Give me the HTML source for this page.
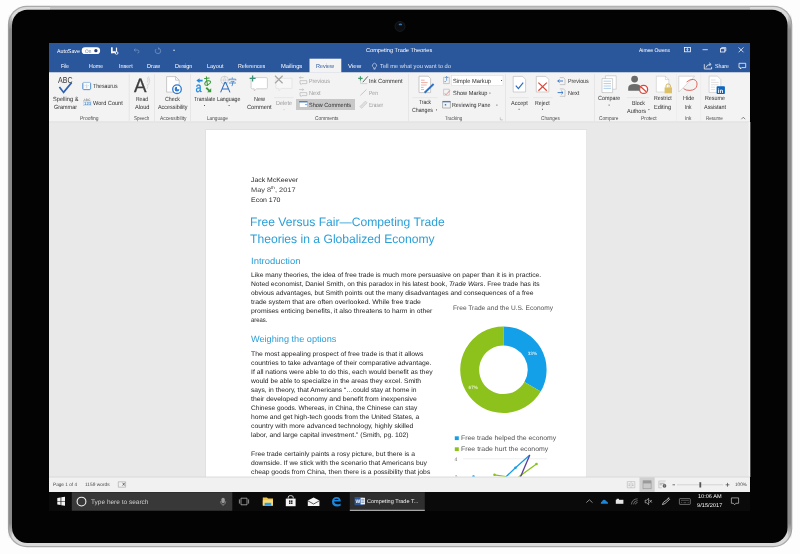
<!DOCTYPE html>
<html><head><meta charset="utf-8">
<style>
*{margin:0;padding:0;box-sizing:border-box}
html,body{width:800px;height:554px;overflow:hidden;background:#fdfdfd;font-family:"Liberation Sans",sans-serif;text-rendering:geometricPrecision}
.a{position:absolute;white-space:nowrap;line-height:1;transform-origin:0 0}
svg{position:absolute;left:0;top:0;will-change:transform}
</style></head><body>
<svg width="800" height="554" viewBox="0 0 800 554">
<defs>
<linearGradient id="sd" x1="0" y1="0" x2="0" y2="1"><stop offset="0" stop-color="#8a8a8a" stop-opacity="0"/><stop offset="0.03" stop-color="#8a8a8a"/><stop offset="0.97" stop-color="#8a8a8a"/><stop offset="1" stop-color="#8a8a8a" stop-opacity="0"/></linearGradient>
</defs>
<!-- frame -->
<rect x="7.9" y="5.7" width="784.4" height="541.6" rx="19" fill="#a9a9a9"/>
<rect x="9" y="6.9" width="782.2" height="539.2" rx="18" fill="#dadada"/>
<rect x="50" y="6.4" width="700" height="3.6" fill="#b9b9b9"/>
<rect x="50" y="7.6" width="700" height="1.2" fill="#cdcdcd"/>
<rect x="8.6" y="14" width="3.6" height="525" fill="url(#sd)"/>
<rect x="787.8" y="14" width="3.6" height="525" fill="url(#sd)"/>
<rect x="12" y="9.8" width="775.6" height="533.2" rx="15.5" fill="#030303"/>
<circle cx="400" cy="26.4" r="5" fill="#0b0d10" stroke="#1f2226" stroke-width="0.7"/>
<ellipse cx="400.4" cy="24.4" rx="1.8" ry="0.9" fill="#3a86c8" opacity="0.85"/>
<!-- screen -->
<rect x="49" y="43" width="701" height="468" fill="#e9e9e9"/>
<rect x="49" y="43" width="701" height="29.5" fill="#2a569b"/>
<rect x="309.5" y="58.7" width="31.8" height="14" fill="#f3f3f3"/>
<rect x="49" y="72.5" width="701" height="49.5" fill="#f3f3f3"/>
<rect x="49" y="121.5" width="701" height="0.8" fill="#dcdcdc"/>
<rect x="748.5" y="122" width="1.8" height="355" fill="#f4f4f4"/>
<!-- page -->
<rect x="205.4" y="129.4" width="381.5" height="348" fill="#dcdcdc"/>
<rect x="206" y="130" width="380.3" height="347" fill="#ffffff"/>
<!-- status bar -->
<rect x="49" y="477" width="701" height="15" fill="#f1f1f1"/>
<rect x="49" y="476.6" width="701" height="0.8" fill="#d4d4d4"/>
<!-- taskbar -->
<rect x="49" y="492" width="701" height="19" fill="#0a0a0a"/>
<rect x="71.8" y="492.2" width="160.5" height="18.5" fill="#383838"/>
<rect x="349.8" y="492.2" width="75" height="18.5" fill="#2f2f2f"/>
<rect x="349.8" y="509.8" width="75" height="1" fill="#c8c8c8"/>
<!-- ===== title bar icons ===== -->
<rect x="81.7" y="47.3" width="18.4" height="6.7" rx="3.35" fill="#fff"/>
<circle cx="95.9" cy="50.65" r="1.65" fill="#1f427c"/>
<g fill="#f4f6fa">
<rect x="111" y="47.3" width="1.7" height="5.9"/>
<rect x="111" y="51.2" width="4.6" height="2"/>
<rect x="115.9" y="47.6" width="1.2" height="4.2"/>
</g>
<circle cx="116.6" cy="53" r="1.35" fill="none" stroke="#eef2f8" stroke-width="0.9"/>
<g stroke="#7895c6" stroke-width="0.75" fill="none">
<path d="M134.2 50H137.2Q139 50 139 51.6Q139 53 137.4 53"/><path d="M135.5 48.6L134.1 50L135.5 51.4"/>
<path d="M156.2 49Q155.2 50 155.2 51Q155.2 53.6 158 53.6Q160.8 53.6 160.8 51Q160.8 48.4 158 48.4"/><path d="M158.3 47.4L159.2 48.4L158.1 49.4"/>
</g>
<rect x="173.4" y="49.7" width="1.3" height="1.1" fill="#fff"/>
<g stroke="#fff" stroke-width="0.75" fill="none">
<rect x="684.4" y="47.6" width="6" height="4.2"/>
<path d="M687.4 51.2V48.6M686.5 49.5L687.4 48.6L688.3 49.5"/>
<path d="M702.5 49.7H707.8"/>
<rect x="720.6" y="48.7" width="4.2" height="3.3"/><path d="M721.6 48.7V47.6H725.8V50.9H724.8"/>
<path d="M738.6 47.4L743.5 52.3M743.5 47.4L738.6 52.3"/>
<path d="M373.6 67.4A2.1 2.1 0 1 1 375.4 67.4V68.4H373.6ZM373.7 69.2H375.3" stroke="#e0e8f4" stroke-width="0.6"/>
<path d="M704.3 64.2V69H711.6V66.9M706 67.6Q706.6 64.6 710.4 64.3M709.2 62.8L711 64.3L709.6 65.9"/>
<path d="M739 63.3H745.7V67.6H741.7L740.4 69V67.6H739Z"/>
</g>
<!-- ===== ribbon ===== -->
<g fill="#e0e0e0">
<rect x="128.8" y="74" width="0.7" height="47"/>
<rect x="154" y="74" width="0.7" height="47"/>
<rect x="190.3" y="74" width="0.7" height="47"/>
<rect x="408.3" y="74" width="0.7" height="47"/>
<rect x="505.3" y="74" width="0.7" height="47"/>
<rect x="594.2" y="74" width="0.7" height="47"/>
<rect x="676.3" y="74" width="0.6" height="47" fill="#e9e9e9"/>
<rect x="700.5" y="74" width="0.6" height="47" fill="#e9e9e9"/>
</g>
<!-- spelling check -->
<path d="M59.4 87L63.6 92.4L71.6 82.6" stroke="#2e63b0" stroke-width="1.7" fill="none"/>
<!-- thesaurus -->
<rect x="82.8" y="82.4" width="7.8" height="7.2" rx="0.9" fill="#f8fafc" stroke="#86b3de" stroke-width="0.8"/>
<path d="M82.8 83.2V89.2M90.6 83.2V89.2M83.4 89.6H90" stroke="#5f97d0" stroke-width="0.9"/>
<path d="M86.7 84.4V88.2" stroke="#a9a9a9" stroke-width="0.5"/>
<path d="M84.6 85.6H85.6M87.8 85.6H88.8" stroke="#b8b8b8" stroke-width="0.5"/>
<!-- word count -->
<text x="83.4" y="100.9" font-family="Liberation Sans" font-size="3.4" fill="#666">ABC</text>
<rect x="83.6" y="101.4" width="7.4" height="4.4" fill="#eef4fb" stroke="#a8c8e8" stroke-width="0.4"/>
<text x="84.1" y="105.3" font-family="Liberation Sans" font-size="4.3" font-weight="bold" fill="#4a8fd4">123</text>
<!-- read aloud waves -->
<g stroke="#cfcfcf" stroke-width="0.8" fill="none">
<path d="M147.2 77.5Q149 80 147.2 82.5M148.5 76.5Q151 80.5 148.5 85"/>
<path d="M147 84Q148.8 86.5 147 89"/>
</g>
<!-- check accessibility -->
<path d="M166.6 76.6H175.6L179.2 80.2V92.1H166.6Z" fill="#fff" stroke="#a9a9a9" stroke-width="0.6"/>
<path d="M175.6 76.6V80.2H179.2" fill="none" stroke="#a9a9a9" stroke-width="0.6"/>
<circle cx="177" cy="89.2" r="4.3" fill="#fff" stroke="#2f7bd1" stroke-width="1.3"/>
<path d="M177 89.2V86.8A2.4 2.4 0 1 0 179.4 89.2Z" fill="#2f7bd1"/>
<!-- translate -->
<path d="M196.3 80.6L199.6 78.2V79.7H202.6V81.5H199.6V83Z" fill="#1e88e0"/>
<text transform="translate(195.5 92.3) scale(0.8 1)" font-family="Liberation Sans" font-size="13.8" fill="#1e88e0" stroke="#1e88e0" stroke-width="0.25">a</text>
<g fill="none" stroke="#3a9b3a" stroke-width="1.05" stroke-linecap="round">
<path d="M204.6 78.6L209.2 78.1M206.4 76.7Q206.6 81 207.6 85.4M209.4 80.9Q206.9 80.5 205.4 82.1Q204.1 83.7 205.2 85Q206 85.8 208.2 84.6Q210.9 83 210.7 81.9Q210.5 80.6 208.9 80.7"/>
</g>
<path d="M211.2 92.3L207.1 92.3L208.4 91L205.6 88.4L206.9 87.1L209.6 89.7L211.2 88.3Z" fill="#3a9b3a"/>
<!-- language -->
<circle cx="224.6" cy="80.1" r="3.9" fill="none" stroke="#bdbdbd" stroke-width="0.6"/>
<path d="M220.7 80.1H228.5M224.6 76.2Q222.4 80.1 224.6 84M224.6 76.2Q226.8 80.1 224.6 84" fill="none" stroke="#c4c4c4" stroke-width="0.5"/>
<path d="M220.6 92.4L224.8 82.6H225.8L230 92.4M222.1 89H228.5" fill="none" stroke="#2f6fbf" stroke-width="1.05"/>
<g fill="none" stroke="#3b7cc8" stroke-width="0.8">
<path d="M232.3 77.4V78.8M229.2 80.5V79.2H235.8V80.5M230.6 81.3H234.3L232.6 82.6M229 83H236M232.5 82.6V85.3Q232.5 85.9 231.6 85.7"/>
</g>
<!-- new comment -->
<path d="M252.3 77.6H266.2Q267.4 77.6 267.4 78.8V87.6Q267.4 88.8 266.2 88.8H256.4L254.3 91V88.8H252.3Q251.1 88.8 251.1 87.6V78.8Q251.1 77.6 252.3 77.6Z" fill="#fff" stroke="#c2c2c2" stroke-width="0.7"/>
<path d="M252.6 75.4V81.4M249.6 78.4H255.6" stroke="#3b8f78" stroke-width="1.3"/>
<!-- delete -->
<path d="M276 78.3H292V88.4H281L279 90.8V88.4H276Z" fill="#f7f7f7" stroke="#dcdcdc" stroke-width="0.6"/>
<path d="M275 75.8L282.6 83.2M282.6 75.8L275 83.2" stroke="#a6a6a6" stroke-width="1.2"/>
<path d="M274 97.6H293.5" stroke="#dddddd" stroke-width="0.5"/>
<!-- previous/next comment faded -->
<g fill="none" stroke="#b9b9b9" stroke-width="0.7">
<path d="M300 80.6H306.8V83.6H302L301 84.6V83.6H300Z"/><path d="M299.2 77.6H303.6M300.6 76.6L299.4 77.6L300.6 78.6"/>
<path d="M300 92.6H306.8V95.6H302L301 96.6V95.6H300Z"/><path d="M299.2 89.6H303.6M302.4 88.6L303.6 89.6L302.4 90.6"/>
</g>
<!-- show comments selected -->
<rect x="296" y="99" width="59" height="11" fill="#c8c8c8"/>
<rect x="299.2" y="101.2" width="8.2" height="6.3" fill="#fff" stroke="#9a9a9a" stroke-width="0.4"/>
<rect x="299.2" y="101.2" width="8.2" height="1.2" fill="#2f6fbf"/>
<path d="M305 104.6H307.2" stroke="#2f6fbf" stroke-width="0.6"/>
<!-- ink comment -->
<path d="M360.6 78.8V83.6H367.2" fill="none" stroke="#bcbcbc" stroke-width="0.6"/>
<path d="M360.4 76.2V80.6M358.2 78.4H362.6" stroke="#3d9a6a" stroke-width="1.1"/>
<path d="M362.8 82.2L367.8 76.4" stroke="#555" stroke-width="0.9"/>
<path d="M360.4 95.4L366.4 89.6" stroke="#c6c6c6" stroke-width="1"/>
<path d="M359.8 106.6L365.4 101L367.2 102.8L361.6 108.4Z" fill="#dedede" stroke="#c2c2c2" stroke-width="0.5"/>
<!-- track changes -->
<path d="M419 76.2H428.2L430.6 78.6V92.6H419Z" fill="#fff" stroke="#a9a9a9" stroke-width="0.6"/>
<path d="M421 80.2H424.6M421 82.6H427.6M421 85H426.6M421 87.4H423.6M421 89.6H424" stroke="#e07a6a" stroke-width="0.6"/>
<path d="M424.6 92.8L433.6 84" stroke="#2e72c8" stroke-width="1.9"/>
<path d="M412.5 97.6H437.5" stroke="#dddddd" stroke-width="0.5"/>
<!-- simple markup / show markup / reviewing pane -->
<rect x="451.6" y="75.6" width="51.4" height="10" fill="#fff" stroke="#dadada" stroke-width="0.5"/>
<g stroke-width="0.6" fill="none">
<path d="M443.6 77.3H449.3V83.6H443.6Z" stroke="#a8a8a8"/>
<path d="M446.6 76.5V80.8M445.3 77.8L446.6 76.5L447.9 77.8" stroke="#2f72c4"/>
<path d="M444.4 81.6H446" stroke="#2f72c4"/>
<path d="M443.6 89.2H449.3V95.2H443.6Z" stroke="#b3b3b3"/>
<path d="M444.6 93.6L446.2 94.6L449.8 90.6" stroke="#d9534f"/>
<path d="M442.6 101.4H450.4V108H442.6Z" stroke="#8a8a8a"/>
</g>
<rect x="442.6" y="101.2" width="7.8" height="1.1" fill="#2f6fbf"/>
<rect x="444.8" y="104.1" width="1.4" height="1.4" fill="#2f6fbf"/>
<path d="M500.3 117.4V119.9H502.9" stroke="#9a9a9a" stroke-width="0.5" fill="none"/>
<!-- accept / reject -->
<path d="M513.2 76.4H522.6L525.6 79.4V92H513.2Z" fill="#fff" stroke="#b5b5b5" stroke-width="0.6"/>
<path d="M515.8 85.6L518.4 88.6L523.2 82.6" stroke="#2e6bbf" stroke-width="1.2" fill="none"/>
<path d="M509.4 97.6H528.8" stroke="#dddddd" stroke-width="0.5"/>
<path d="M536.3 76.4H545.8L548.8 79.4V92H536.3Z" fill="#fff" stroke="#b5b5b5" stroke-width="0.6"/>
<path d="M538.4 82.6L546.8 90.8M546.8 82.6L538.4 90.8" stroke="#d9473a" stroke-width="1.2"/>
<path d="M533 97.6H552.5" stroke="#dddddd" stroke-width="0.5"/>
<!-- prev/next change -->
<g fill="none" stroke="#9f9f9f" stroke-width="0.5">
<path d="M559.8 77.6H563.6L565 79V84.6H559.8"/>
<path d="M559.8 88.9H563.6L565 90.3V96.3H559.8"/>
</g>
<path d="M557.6 81H563M559.4 79.4L557.8 81L559.4 82.6" stroke="#2f72c4" stroke-width="0.9" fill="none"/>
<path d="M557.6 92.6H563M561.4 91L563 92.6L561.4 94.2" stroke="#2f72c4" stroke-width="0.9" fill="none"/>
<!-- compare -->
<path d="M605.4 75.8H616.2V89.2H605.4Z" fill="#fff" stroke="#b0b0b0" stroke-width="0.5"/>
<path d="M602 78.6H612.6V92.6H602Z" fill="#fff" stroke="#a8a8a8" stroke-width="0.5"/>
<path d="M603.6 81.2H611M603.6 83.6H611M603.6 86H611M603.6 88.4H611" stroke="#9cc3e6" stroke-width="0.8"/>
<!-- block authors -->
<circle cx="634.6" cy="79.1" r="3.4" fill="#6b6b6b"/>
<path d="M628.2 90.8V88Q628.2 84 634.6 84Q641 84 641 88V90.8Z" fill="#6b6b6b"/>
<circle cx="643.6" cy="89.4" r="4" fill="#fff" stroke="#d9473a" stroke-width="1.3"/>
<path d="M641 87L646.2 91.8" stroke="#d9473a" stroke-width="1.2"/>
<path d="M627 97.6H649" stroke="#dddddd" stroke-width="0.5"/>
<!-- restrict editing -->
<path d="M656.3 76.2H665.4L668.8 79.6V92H656.3Z" fill="#fff" stroke="#bdbdbd" stroke-width="0.5"/>
<path d="M665.4 76.2V79.6H668.8" fill="none" stroke="#bdbdbd" stroke-width="0.5"/>
<path d="M666 87.5V85.9Q666 83.9 668.2 83.9Q670.4 83.9 670.4 85.9V87.5" fill="none" stroke="#d6b65a" stroke-width="1"/>
<rect x="664.6" y="87.4" width="7.4" height="5.9" fill="#dcc068"/>
<!-- hide ink -->
<path d="M678.8 76.2H694.6L678.8 92Z" fill="#fff" stroke="#b9b9b9" stroke-width="0.5"/>
<path d="M686.6 82Q690 79 693.4 79.4Q697.4 80.2 697 85Q696.4 90 690 90.4Q685.6 90.6 683.6 88.6" fill="none" stroke="#d9473a" stroke-width="0.8"/>
<!-- resume assistant -->
<path d="M709.1 76.1H717.4L720.8 79.5V92.4H709.1Z" fill="#fff" stroke="#b5b5b5" stroke-width="0.5"/>
<path d="M711 80H715.6M711 82.4H718.6M711 84.8H718.6M711 87.2H715M711 89.6H715" stroke="#c9c9c9" stroke-width="0.6"/>
<rect x="716.6" y="86.3" width="8.3" height="7.8" rx="0.8" fill="#0a66c2"/>
<text x="717.7" y="92.7" font-family="Liberation Sans" font-size="6.2" font-weight="bold" fill="#fff">in</text>
<path d="M741.4 119.2L743.3 117.2L745.2 119.2" stroke="#555" stroke-width="0.7" fill="none"/>
<!-- dropdown dots -->
<g fill="#555">
<rect x="204" y="105" width="1" height="1"/>
<rect x="228.6" y="105" width="1" height="1"/>
<rect x="283.6" y="109.2" width="0.9" height="0.9" fill="#c2c2c2"/>
<rect x="436" y="109.4" width="1" height="1"/>
<rect x="501" y="80" width="1" height="1"/>
<rect x="489.4" y="92.6" width="1" height="1"/>
<rect x="496.4" y="104.6" width="1" height="1"/>
<rect x="518.6" y="108.8" width="1" height="1"/>
<rect x="542" y="108.8" width="1" height="1"/>
<rect x="608.6" y="104.6" width="1" height="1"/>
<rect x="648.4" y="109.1" width="1" height="1"/>
</g>

<!-- ===== document chart ===== -->
<g transform="translate(503.4 369.8)">
<path d="M0 -43.2A43.2 43.2 0 0 1 37.3 21.8L21 12.3A24.3 24.3 0 0 0 0 -24.3Z" fill="#13a0e8"/>
<path d="M37.3 21.8A43.2 43.2 0 1 1 0 -43.2L0 -24.3A24.3 24.3 0 1 0 21 12.3Z" fill="#8cc21b"/>
</g>
<text x="527.8" y="354.6" font-family="Liberation Sans" font-size="4.6" fill="#fff">33%</text>
<text x="468.6" y="388.6" font-family="Liberation Sans" font-size="4.6" fill="#fff">67%</text>
<rect x="454.8" y="436.3" width="4" height="3.8" fill="#13a0e8"/>
<rect x="454.8" y="447.3" width="4" height="3.8" fill="#8cc21b"/>
<text x="454.6" y="461" font-family="Liberation Sans" font-size="5" fill="#666">4</text>
<clipPath id="pg"><rect x="206" y="130" width="380.3" height="346.6"/></clipPath>
<g clip-path="url(#pg)">
<text x="454.8" y="479.2" font-family="Liberation Sans" font-size="5" fill="#666">3</text>
<path d="M463 458.8H547" stroke="#e2e2e2" stroke-width="0.6"/>
<g fill="none" stroke-width="1.3" stroke-linejoin="round">
<path d="M494.5 474.8L505.8 476.6M518.5 477L536.5 464" stroke="#8cc21b"/>
<path d="M505.8 477L515.5 467.8L529.8 455" stroke="#13a0e8"/>
<path d="M520 478L529.8 455" stroke="#5b3c9e"/>
</g>
<circle cx="473.5" cy="476.6" r="1.3" fill="#13a0e8"/>
<circle cx="515.5" cy="467.8" r="1.3" fill="#13a0e8"/>
<circle cx="494.5" cy="474.8" r="1.3" fill="#8cc21b"/>
<circle cx="536.5" cy="464" r="1.3" fill="#8cc21b"/>
</g>
<!-- ===== status bar icons ===== -->
<g fill="none" stroke="#8a8a8a" stroke-width="0.55">
<path d="M118.3 481.8H125.6V487.2H118.3Z" stroke="#9a9a9a"/>
<path d="M122.6 482.8L124.8 485.6M124.8 482.8L122.6 485.6" stroke="#444" stroke-width="0.7"/>
<path d="M627.3 481.6V487.8M631 481.6V487.8M634.8 481.6V487.8M627.3 481.6H634.8M627.3 487.8H634.8" stroke="#b0b0b0"/>
<path d="M628.6 484H629.8M632.2 484H633.4M628.6 485.6H629.8M632.2 485.6H633.4" stroke="#7a7a7a"/>
</g>
<rect x="639.5" y="477.3" width="15.2" height="14.6" fill="#d0d0d0"/>
<rect x="643" y="480.8" width="8.1" height="8" fill="#c9c9c9" stroke="#8a8a8a" stroke-width="0.5"/>
<rect x="643" y="480.8" width="8.1" height="2.6" fill="#9a9a9a"/>
<g fill="none" stroke="#8a8a8a" stroke-width="0.55">
<path d="M658.8 481H665.6M658.8 481V487.8H662" stroke="#b0b0b0"/>
<path d="M659.6 483.3H664.6M659.6 484.8H662.2" stroke="#7a7a7a"/>
</g>
<circle cx="664.5" cy="485.9" r="1.8" fill="#4a4a4a"/><path d="M662.7 485.9H666.3M664.5 484.1V487.7" stroke="#cfcfcf" stroke-width="0.35"/>
<path d="M672.5 484.8H675" stroke="#555" stroke-width="0.8"/>
<path d="M677 484.8H723.2" stroke="#b5b5b5" stroke-width="0.5"/>
<rect x="699.4" y="482.2" width="1.8" height="5.3" fill="#555"/>
<path d="M725.6 484.8H729.4M727.5 482.9V486.7" stroke="#555" stroke-width="0.8"/>
<!-- ===== taskbar icons ===== -->
<g fill="#f2f2f2">
<path d="M57.3 497.9L60.6 497.4V500.9H57.3Z"/><path d="M61.3 497.3L65 496.8V500.9H61.3Z"/>
<path d="M57.3 501.6H60.6V505.1L57.3 504.6Z"/><path d="M61.3 501.6H65V505.7L61.3 505.2Z"/>
</g>
<circle cx="81.5" cy="501.6" r="4.4" fill="none" stroke="#f0f0f0" stroke-width="1.1"/>
<rect x="221.4" y="497.8" width="3.4" height="5.4" rx="1.7" fill="#9a9a9a"/>
<path d="M220.4 501.2Q220.4 504.6 223.1 504.6Q225.8 504.6 225.8 501.2M223.1 504.6V506" fill="none" stroke="#9a9a9a" stroke-width="0.6"/>
<g fill="none" stroke="#c8c8c8" stroke-width="0.7">
<path d="M241 498.2H247V504.8H241Z"/><path d="M239.4 499.4V503.6M248.6 499.4V503.6"/>
</g>
<path d="M262.8 497.6H267L268 498.6H273V505.6H262.8Z" fill="#f2c84b"/>
<path d="M262.8 500.2H273V505.6H262.8Z" fill="#f8dc7a"/>
<path d="M264.6 502.8H271.2V505.6H264.6Z" fill="#2b9be6"/>
<path d="M285.8 498.6H295.6V506.2H285.8Z" fill="#f4f4f4"/>
<path d="M288.2 498.6V497Q288.2 495.6 290.7 495.6Q293.2 495.6 293.2 497V498.6" fill="none" stroke="#f4f4f4" stroke-width="0.8"/>
<g fill="#111"><rect x="289" y="500.4" width="1.5" height="1.5"/><rect x="291" y="500.4" width="1.5" height="1.5"/><rect x="289" y="502.4" width="1.5" height="1.5"/><rect x="291" y="502.4" width="1.5" height="1.5"/></g>
<path d="M307.8 500.6L313.6 497.6L319.4 500.6V506H307.8Z" fill="#f4f4f4"/>
<path d="M307.8 500.8L313.6 504L319.4 500.8" fill="none" stroke="#111" stroke-width="0.7"/>
<path d="M332 501.4Q332.4 496.9 336.6 496.9Q340.8 497 340.8 501.6H334.2Q334.4 504.3 337.4 504.3Q339.4 504.3 340.6 503.4V505.7Q339.2 506.5 337.2 506.5Q332 506.5 332 501.4ZM334.3 500H338.6Q338.4 498.7 336.5 498.7Q334.8 498.7 334.3 500Z" fill="#1a86dc"/>
<rect x="354.6" y="497" width="8.8" height="8.2" fill="#2b579a"/>
<rect x="360.6" y="497.8" width="4.4" height="6.6" fill="#f4f4f4"/>
<path d="M361.3 499.4H364.4M361.3 500.9H364.4M361.3 502.4H364.4" stroke="#2b579a" stroke-width="0.5"/>
<text x="355.5" y="503.4" font-family="Liberation Sans" font-size="5" font-weight="bold" fill="#fff">W</text>
<path d="M586.3 502.6L589.4 499.8L592.5 502.6" fill="none" stroke="#bdbdbd" stroke-width="0.7"/>
<path d="M600.8 503.8H608Q608.3 501.4 606.3 501.3Q605.6 499.4 603.6 499.8Q602.2 500.2 602.1 501.5Q600.6 501.6 600.8 503.8Z" fill="#1a86dc"/>
<rect x="615.8" y="499.8" width="7.6" height="4" fill="#e6e6e6"/>
<rect x="616.6" y="498.8" width="2.4" height="1.4" fill="#e6e6e6"/>
<path d="M631.4 504.4Q632 499 637.6 498.8M633.4 504.4Q634 500.8 637.6 500.6M635.4 504.4Q635.6 502.6 637.6 502.4" fill="none" stroke="#8f8f8f" stroke-width="0.7"/>
<path d="M645.2 500.2H646.6L648.6 498.4V504.6L646.6 502.8H645.2Z" fill="none" stroke="#d6d6d6" stroke-width="0.6"/>
<path d="M649.6 500L651.8 502.6M651.8 500L649.6 502.6" stroke="#d6d6d6" stroke-width="0.6"/>
<path d="M662.4 504.6L663.4 502.4L668.8 498.4L669.6 499.4L665 503.6ZM667.6 498.4L669.2 497.8" fill="none" stroke="#d0d0d0" stroke-width="0.8"/>
<rect x="679.4" y="498.6" width="10.9" height="5.8" rx="0.6" fill="none" stroke="#a9a9a9" stroke-width="0.6"/>
<path d="M681 500.4H688.8M681 502.4H682.2M683.6 502.6H686.2M687.6 502.4H688.8" stroke="#8a8a8a" stroke-width="0.5"/>
<path d="M731.4 497.9H738.6V503.3H735.8L734.6 504.8L733.4 503.3H731.4Z" fill="none" stroke="#d6d6d6" stroke-width="0.65"/>

</svg>
<div style="position:absolute;left:0;top:0;width:800px;height:554px;will-change:transform"><div class="a" style="left:56.80px;top:49.66px;font-size:5.6px;color:#fff;transform:scaleX(0.9437);">AutoSave</div>
<div class="a" style="left:84.60px;top:49.57px;font-size:5.0px;color:#6a7fa6;transform:scaleX(0.9443);">On</div>
<div class="a" style="left:365.75px;top:49.46px;font-size:5.6px;color:#fff;transform:scaleX(1.0019);">Competing Trade Theories</div>
<div class="a" style="left:639.00px;top:48.51px;font-size:5.3px;color:#fff;transform:scaleX(0.9398);">Aimee Owens</div>
<div class="a" style="left:60.80px;top:64.69px;font-size:5.8px;color:#fff;transform:scaleX(0.8776);">File</div>
<div class="a" style="left:88.80px;top:64.69px;font-size:5.8px;color:#fff;transform:scaleX(0.9180);">Home</div>
<div class="a" style="left:118.50px;top:64.69px;font-size:5.8px;color:#fff;transform:scaleX(0.9448);">Insert</div>
<div class="a" style="left:147.00px;top:64.69px;font-size:5.8px;color:#fff;transform:scaleX(0.9607);">Draw</div>
<div class="a" style="left:174.75px;top:64.69px;font-size:5.8px;color:#fff;transform:scaleX(0.9697);">Design</div>
<div class="a" style="left:207.25px;top:64.69px;font-size:5.8px;color:#fff;transform:scaleX(0.9479);">Layout</div>
<div class="a" style="left:238.30px;top:64.69px;font-size:5.8px;color:#fff;transform:scaleX(0.9172);">References</div>
<div class="a" style="left:280.50px;top:64.69px;font-size:5.8px;color:#fff;transform:scaleX(0.9993);">Mailings</div>
<div class="a" style="left:348.00px;top:64.69px;font-size:5.8px;color:#fff;transform:scaleX(1.0627);">View</div>
<div class="a" style="left:316.25px;top:64.69px;font-size:5.8px;color:#2b579a;transform:scaleX(0.9466);">Review</div>
<div class="a" style="left:380.00px;top:65.19px;font-size:5.8px;color:#d6e0f0;transform:scaleX(0.9924);">Tell me what you want to do</div>
<div class="a" style="left:715.00px;top:64.69px;font-size:5.8px;color:#fff;transform:scaleX(0.9051);">Share</div>
<div class="a" style="left:52.50px;top:96.52px;font-size:6.0px;color:#2e2e2e;transform:scaleX(0.9434);">Spelling &</div>
<div class="a" style="left:54.00px;top:104.72px;font-size:6.0px;color:#2e2e2e;transform:scaleX(0.9075);">Grammar</div>
<div class="a" style="left:93.00px;top:84.22px;font-size:6.0px;color:#2e2e2e;transform:scaleX(0.8639);">Thesaurus</div>
<div class="a" style="left:93.00px;top:101.42px;font-size:6.0px;color:#2e2e2e;transform:scaleX(0.9340);">Word Count</div>
<div class="a" style="left:80.00px;top:116.96px;font-size:5.6px;color:#505050;transform:scaleX(0.8876);">Proofing</div>
<div class="a" style="left:136.00px;top:96.52px;font-size:6.0px;color:#2e2e2e;transform:scaleX(0.8366);">Read</div>
<div class="a" style="left:134.50px;top:104.72px;font-size:6.0px;color:#2e2e2e;transform:scaleX(0.9440);">Aloud</div>
<div class="a" style="left:134.20px;top:116.96px;font-size:5.6px;color:#505050;transform:scaleX(0.8059);">Speech</div>
<div class="a" style="left:165.00px;top:96.52px;font-size:6.0px;color:#2e2e2e;transform:scaleX(0.8815);">Check</div>
<div class="a" style="left:158.00px;top:104.72px;font-size:6.0px;color:#2e2e2e;transform:scaleX(0.9025);">Accessibility</div>
<div class="a" style="left:159.50px;top:116.96px;font-size:5.6px;color:#505050;transform:scaleX(0.8697);">Accessibility</div>
<div class="a" style="left:193.50px;top:96.52px;font-size:6.0px;color:#2e2e2e;transform:scaleX(0.8590);">Translate</div>
<div class="a" style="left:217.00px;top:96.52px;font-size:6.0px;color:#2e2e2e;transform:scaleX(0.8800);">Language</div>
<div class="a" style="left:206.50px;top:116.96px;font-size:5.6px;color:#505050;transform:scaleX(0.8437);">Language</div>
<div class="a" style="left:253.50px;top:96.52px;font-size:6.0px;color:#2e2e2e;transform:scaleX(0.9155);">New</div>
<div class="a" style="left:246.50px;top:104.72px;font-size:6.0px;color:#2e2e2e;transform:scaleX(0.9494);">Comment</div>
<div class="a" style="left:276.00px;top:100.72px;font-size:6.0px;color:#9a9a9a;transform:scaleX(0.9225);">Delete</div>
<div class="a" style="left:309.00px;top:79.22px;font-size:6.0px;color:#9a9a9a;transform:scaleX(0.8910);">Previous</div>
<div class="a" style="left:309.00px;top:91.22px;font-size:6.0px;color:#9a9a9a;transform:scaleX(0.9316);">Next</div>
<div class="a" style="left:309.00px;top:103.22px;font-size:6.0px;color:#2e2e2e;transform:scaleX(0.9193);">Show Comments</div>
<div class="a" style="left:314.50px;top:116.96px;font-size:5.6px;color:#505050;transform:scaleX(0.8689);">Comments</div>
<div class="a" style="left:369.00px;top:79.22px;font-size:6.0px;color:#2e2e2e;transform:scaleX(0.9387);">Ink Comment</div>
<div class="a" style="left:369.00px;top:91.22px;font-size:6.0px;color:#9a9a9a;transform:scaleX(0.8421);">Pen</div>
<div class="a" style="left:369.00px;top:103.22px;font-size:6.0px;color:#9a9a9a;transform:scaleX(0.8035);">Eraser</div>
<div class="a" style="left:419.00px;top:100.22px;font-size:6.0px;color:#2e2e2e;transform:scaleX(0.8118);">Track</div>
<div class="a" style="left:412.00px;top:108.02px;font-size:6.0px;color:#2e2e2e;transform:scaleX(0.8739);">Changes</div>
<div class="a" style="left:452.80px;top:78.72px;font-size:6.0px;color:#2e2e2e;transform:scaleX(0.9496);">Simple Markup</div>
<div class="a" style="left:452.50px;top:91.22px;font-size:6.0px;color:#2e2e2e;transform:scaleX(0.9404);">Show Markup</div>
<div class="a" style="left:452.00px;top:103.22px;font-size:6.0px;color:#2e2e2e;transform:scaleX(0.8879);">Reviewing Pane</div>
<div class="a" style="left:445.00px;top:116.96px;font-size:5.6px;color:#505050;transform:scaleX(0.8094);">Tracking</div>
<div class="a" style="left:511.00px;top:100.62px;font-size:6.0px;color:#2e2e2e;transform:scaleX(0.9131);">Accept</div>
<div class="a" style="left:535.25px;top:100.62px;font-size:6.0px;color:#2e2e2e;transform:scaleX(0.8669);">Reject</div>
<div class="a" style="left:567.75px;top:79.22px;font-size:6.0px;color:#2e2e2e;transform:scaleX(0.8889);">Previous</div>
<div class="a" style="left:567.75px;top:91.12px;font-size:6.0px;color:#2e2e2e;transform:scaleX(0.9114);">Next</div>
<div class="a" style="left:540.60px;top:116.96px;font-size:5.6px;color:#505050;transform:scaleX(0.8391);">Changes</div>
<div class="a" style="left:597.75px;top:96.22px;font-size:6.0px;color:#2e2e2e;transform:scaleX(0.9013);">Compare</div>
<div class="a" style="left:599.40px;top:116.96px;font-size:5.6px;color:#505050;transform:scaleX(0.8407);">Compare</div>
<div class="a" style="left:632.00px;top:100.62px;font-size:6.0px;color:#2e2e2e;transform:scaleX(0.8860);">Block</div>
<div class="a" style="left:627.00px;top:108.72px;font-size:6.0px;color:#2e2e2e;transform:scaleX(0.9184);">Authors</div>
<div class="a" style="left:641.25px;top:116.96px;font-size:5.6px;color:#505050;transform:scaleX(0.8825);">Protect</div>
<div class="a" style="left:653.50px;top:96.22px;font-size:6.0px;color:#2e2e2e;transform:scaleX(0.8725);">Restrict</div>
<div class="a" style="left:654.00px;top:104.72px;font-size:6.0px;color:#2e2e2e;transform:scaleX(0.9260);">Editing</div>
<div class="a" style="left:682.80px;top:96.32px;font-size:6.0px;color:#2e2e2e;transform:scaleX(0.9073);">Hide</div>
<div class="a" style="left:685.40px;top:104.82px;font-size:6.0px;color:#2e2e2e;transform:scaleX(0.8234);">Ink</div>
<div class="a" style="left:685.20px;top:116.86px;font-size:5.6px;color:#505050;transform:scaleX(0.8435);">Ink</div>
<div class="a" style="left:704.90px;top:96.32px;font-size:6.0px;color:#2e2e2e;transform:scaleX(0.8906);">Resume</div>
<div class="a" style="left:703.80px;top:104.82px;font-size:6.0px;color:#2e2e2e;transform:scaleX(0.9078);">Assistant</div>
<div class="a" style="left:706.40px;top:116.86px;font-size:5.6px;color:#505050;transform:scaleX(0.8108);">Resume</div>
<div class="a" style="left:58.00px;top:75.82px;font-size:8.6px;color:#3a3a3a;transform:scaleX(0.8205);">ABC</div>
<div class="a" style="left:134.00px;top:77.19px;font-size:19.5px;color:#3d3d3d;transform:scaleX(0.9604);-webkit-text-stroke:0.3px #3d3d3d;">A</div>
<div class="a" style="left:250.50px;top:188.00px;font-size:6.5px;color:#3b3b3b;transform:scaleX(1.1329);">May 8<span style="font-size:4.2px;position:relative;top:-2.6px">th</span>, 2017</div>
<div class="a" style="left:250.50px;top:178.20px;font-size:6.5px;color:#222222;transform:scaleX(1.0577);">Jack McKeever</div>
<div class="a" style="left:250.50px;top:197.70px;font-size:6.5px;color:#222222;transform:scaleX(1.0739);">Econ 170</div>
<div class="a" style="left:250.30px;top:216.17px;font-size:12.2px;color:#2a9fd8;transform:scaleX(0.9946);">Free Versus Fair—Competing Trade</div>
<div class="a" style="left:250.30px;top:233.37px;font-size:12.2px;color:#2a9fd8;transform:scaleX(0.9950);">Theories in a Globalized Economy</div>
<div class="a" style="left:250.60px;top:257.33px;font-size:9.0px;color:#2a9fd8;transform:scaleX(1.0504);">Introduction</div>
<div class="a" style="left:250.50px;top:273.10px;font-size:6.5px;color:#222222;transform:scaleX(1.0406);">Like many theories, the idea of free trade is much more persuasive on paper than it is in practice.</div>
<div class="a" style="left:250.50px;top:282.10px;font-size:6.5px;color:#222222;transform:scaleX(1.0355);">Noted economist, Daniel Smith, on this paradox in his latest book, <i>Trade Wars</i>. Free trade has its</div>
<div class="a" style="left:250.50px;top:291.10px;font-size:6.5px;color:#222222;transform:scaleX(1.0341);">obvious advantages, but Smith points out the many disadvantages and consequences of a free</div>
<div class="a" style="left:250.50px;top:300.10px;font-size:6.5px;color:#222222;transform:scaleX(1.0591);">trade system that are often overlooked. While free trade</div>
<div class="a" style="left:250.50px;top:309.10px;font-size:6.5px;color:#222222;transform:scaleX(1.0542);">promises enticing benefits, it also threatens to harm in other</div>
<div class="a" style="left:250.50px;top:318.10px;font-size:6.5px;color:#222222;transform:scaleX(0.9127);">areas.</div>
<div class="a" style="left:250.60px;top:335.33px;font-size:9.0px;color:#2a9fd8;transform:scaleX(1.0178);">Weighing the options</div>
<div class="a" style="left:250.50px;top:351.90px;font-size:6.5px;color:#222222;transform:scaleX(1.0457);">The most appealing prospect of free trade is that it allows</div>
<div class="a" style="left:250.50px;top:360.93px;font-size:6.5px;color:#222222;transform:scaleX(1.0444);">countries to take advantage of their comparative advantage.</div>
<div class="a" style="left:250.50px;top:369.96px;font-size:6.5px;color:#222222;transform:scaleX(1.0470);">If all nations were able to do this, each would benefit as they</div>
<div class="a" style="left:250.50px;top:378.99px;font-size:6.5px;color:#222222;transform:scaleX(1.0324);">would be able to specialize in the areas they excel. Smith</div>
<div class="a" style="left:250.50px;top:388.02px;font-size:6.5px;color:#222222;transform:scaleX(1.0348);">says, in theory, that Americans “…could stay at home in</div>
<div class="a" style="left:250.50px;top:397.05px;font-size:6.5px;color:#222222;transform:scaleX(1.0524);">their developed economy and benefit from inexpensive</div>
<div class="a" style="left:250.50px;top:406.08px;font-size:6.5px;color:#222222;transform:scaleX(1.0087);">Chinese goods. Whereas, in China, the Chinese can stay</div>
<div class="a" style="left:250.50px;top:415.11px;font-size:6.5px;color:#222222;transform:scaleX(1.0425);">home and get high-tech goods from the United States, a</div>
<div class="a" style="left:250.50px;top:424.14px;font-size:6.5px;color:#222222;transform:scaleX(1.0509);">country with more advanced technology, highly skilled</div>
<div class="a" style="left:250.50px;top:433.17px;font-size:6.5px;color:#222222;transform:scaleX(1.0460);">labor, and large capital investment.” (Smith, pg. 102)</div>
<div class="a" style="left:250.50px;top:451.90px;font-size:6.5px;color:#222222;transform:scaleX(1.0441);">Free trade certainly paints a rosy picture, but there is a</div>
<div class="a" style="left:250.50px;top:460.93px;font-size:6.5px;color:#222222;transform:scaleX(1.0521);">downside. If we stick with the scenario that Americans buy</div>
<div class="a" style="left:250.50px;top:469.96px;font-size:6.5px;color:#222222;transform:scaleX(1.0424);">cheap goods from China, then there is a possibility that jobs</div>
<div class="a" style="left:453.00px;top:305.61px;font-size:6.6px;color:#505050;transform:scaleX(0.9994);">Free Trade and the U.S. Economy</div>
<div class="a" style="left:460.75px;top:435.51px;font-size:6.6px;color:#505050;transform:scaleX(1.0394);">Free trade helped the economy</div>
<div class="a" style="left:460.75px;top:446.71px;font-size:6.6px;color:#505050;transform:scaleX(1.0486);">Free trade hurt the economy</div>
<div class="a" style="left:53.00px;top:484.15px;font-size:4.9px;color:#444444;transform:scaleX(0.9588);">Page 1 of 4</div>
<div class="a" style="left:85.25px;top:484.15px;font-size:4.9px;color:#444444;transform:scaleX(0.9891);">1159 words</div>
<div class="a" style="left:735.20px;top:484.15px;font-size:4.9px;color:#444444;transform:scaleX(0.9428);">100%</div>
<div class="a" style="left:91.10px;top:500.08px;font-size:6.4px;color:#cfcfcf;transform:scaleX(1.0162);">Type here to search</div>
<div class="a" style="left:367.00px;top:500.24px;font-size:5.5px;color:#f0f0f0;transform:scaleX(1.0068);">Competing Trade T...</div>
<div class="a" style="left:698.10px;top:495.44px;font-size:5.5px;color:#f5f5f5;transform:scaleX(1.0151);">10:06 AM</div>
<div class="a" style="left:697.00px;top:503.64px;font-size:5.5px;color:#f5f5f5;transform:scaleX(1.0340);">9/15/2017</div></div>
</body></html>
